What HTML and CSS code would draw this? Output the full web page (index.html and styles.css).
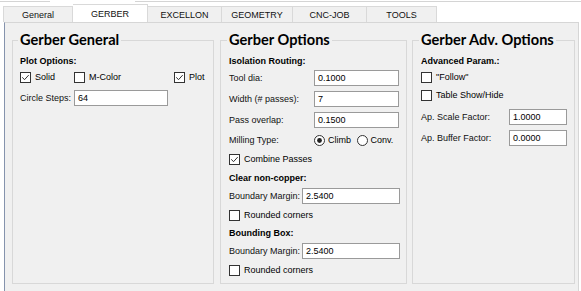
FILE: index.html
```html
<!DOCTYPE html>
<html>
<head>
<meta charset="utf-8">
<link rel="stylesheet" href="styles.css">
</head>
<body>
<div class="topline"></div>
<div class="tabs">
  <div class="tab t-general">General</div>
  <div class="tab t-gerber active">GERBER</div>
  <div class="tab t-excellon">EXCELLON</div>
  <div class="tab t-geometry">GEOMETRY</div>
  <div class="tab t-cnc">CNC-JOB</div>
  <div class="tab t-tools">TOOLS</div>
</div>
<div class="pane">
  <fieldset class="group g-general">
    <legend>Gerber General</legend>
    <div class="head">Plot Options:</div>
    <div class="checks3 mt2">
      <div class="chk"><svg class="box" viewBox="0 0 11 11"><rect x="0.5" y="0.5" width="10" height="10" fill="#fff" stroke="#333"/><path d="M2.3 5.3l2.2 2.4 4.2-4.6" fill="none" stroke="#333" stroke-width="1"/></svg>Solid</div>
      <div class="chk"><svg class="box" viewBox="0 0 11 11"><rect x="0.5" y="0.5" width="10" height="10" fill="#fff" stroke="#333"/></svg>M-Color</div>
      <div class="chk"><svg class="box" viewBox="0 0 11 11"><rect x="0.5" y="0.5" width="10" height="10" fill="#fff" stroke="#333"/><path d="M2.3 5.3l2.2 2.4 4.2-4.6" fill="none" stroke="#333" stroke-width="1"/></svg>Plot</div>
    </div>
    <div class="field f-gen mt6">
      <span class="lbl">Circle Steps:</span><span class="inp">64</span>
    </div>
  </fieldset>

  <fieldset class="group g-options">
    <legend>Gerber Options</legend>
    <div class="head">Isolation Routing:</div>
    <div class="field f-opt mt2"><span class="lbl">Tool dia:</span><span class="inp">0.1000</span></div>
    <div class="field f-opt mt5"><span class="lbl">Width (# passes):</span><span class="inp">7</span></div>
    <div class="field f-opt mt5"><span class="lbl">Pass overlap:</span><span class="inp">0.1500</span></div>
    <div class="field f-opt mt4">
      <span class="lbl">Milling Type:</span>
      <span class="radios">
        <span class="rad"><svg class="box" viewBox="0 0 11 11"><circle cx="5.5" cy="5.5" r="5" fill="#fff" stroke="#333"/><circle cx="5.5" cy="5.5" r="2.4" fill="#222"/></svg>Climb</span>
        <span class="rad"><svg class="box" viewBox="0 0 11 11"><circle cx="5.5" cy="5.5" r="5" fill="#fff" stroke="#333"/></svg>Conv.</span>
      </span>
    </div>
    <div class="chk row mt4"><svg class="box" viewBox="0 0 11 11"><rect x="0.5" y="0.5" width="10" height="10" fill="#fff" stroke="#333"/><path d="M2.3 5.3l2.2 2.4 4.2-4.6" fill="none" stroke="#333" stroke-width="1"/></svg>Combine Passes</div>
    <div class="head mt5">Clear non-copper:</div>
    <div class="field f-bm mt3"><span class="lbl">Boundary Margin:</span><span class="inp">2.5400</span></div>
    <div class="chk row mt4"><svg class="box" viewBox="0 0 11 11"><rect x="0.5" y="0.5" width="10" height="10" fill="#fff" stroke="#333"/></svg>Rounded corners</div>
    <div class="head mt4">Bounding Box:</div>
    <div class="field f-bm mt3"><span class="lbl">Boundary Margin:</span><span class="inp">2.5400</span></div>
    <div class="chk row mt4"><svg class="box" viewBox="0 0 11 11"><rect x="0.5" y="0.5" width="10" height="10" fill="#fff" stroke="#333"/></svg>Rounded corners</div>
  </fieldset>

  <fieldset class="group g-adv">
    <legend>Gerber Adv. Options</legend>
    <div class="head">Advanced Param.:</div>
    <div class="chk row mt2"><svg class="box" viewBox="0 0 11 11"><rect x="0.5" y="0.5" width="10" height="10" fill="#fff" stroke="#333"/></svg>"Follow"</div>
    <div class="chk row mt4"><svg class="box" viewBox="0 0 11 11"><rect x="0.5" y="0.5" width="10" height="10" fill="#fff" stroke="#333"/></svg>Table Show/Hide</div>
    <div class="field f-adv mt7"><span class="lbl">Ap. Scale Factor:</span><span class="inp">1.0000</span></div>
    <div class="field f-adv mt5"><span class="lbl">Ap. Buffer Factor:</span><span class="inp">0.0000</span></div>
  </fieldset>
</div>
</body>
</html>
```

FILE: styles.css
```css
html, body {
  margin: 0;
  padding: 0;
  background: #ffffff;
  overflow: hidden;
}
body {
  width: 581px;
  height: 291px;
  font-family: "Liberation Sans", Arial, sans-serif;
  font-size: 9px;
  color: #000;
}
.topline {
  margin-top: 1px;
  height: 1px;
  background: linear-gradient(to right, #d4d4d4 0 50px, transparent 50px 135px, #d4d4d4 135px);
}
.tabs {
  display: flex;
  align-items: flex-end;
  height: 20px;
  padding-left: 3px;
}
.tab {
  box-sizing: border-box;
  height: 16px;
  background: #f0f0f0;
  border: 1px solid #d9d9d9;
  border-bottom: none;
  border-left: none;
  display: flex;
  align-items: center;
  justify-content: center;
  padding-top: 1px;
  color: #111;
}
.tab.t-general { border-left: 1px solid #d9d9d9; width: 70px; }
.tab.t-gerber { width: 75px; }
.tab.t-excellon { width: 74px; }
.tab.t-geometry { width: 71px; }
.tab.t-cnc { width: 74px; }
.tab.t-tools { width: 70px; }
.tab.active {
  height: 18px;
  background: #ffffff;
  border-color: #d9d9d9;
  padding-top: 0;
}
.pane {
  box-sizing: border-box;
  margin-left: 4px;
  width: 575px;
  height: 280px;
  background: #f0f0f0;
  border: 1px solid #d6d6d6;
  border-left-color: #8593ad;
  display: flex;
  align-items: flex-start;
  gap: 6px;
  padding: 8px 0 0 7px;
}
.group {
  box-sizing: border-box;
  margin: 0;
  height: 253px;
  border: 1px solid #d8d8d8;
  padding: 0 6px 0 7px;
  min-width: 0;
  display: flex;
  flex-direction: column;
}
.group legend {
  font-family: Lato, "Liberation Sans", sans-serif;
  font-weight: 700;
  font-size: 14.6px;
  line-height: 18px;
  padding: 0 2px;
  margin-left: -2px;
  color: #000;
}
.g-general { width: 202px; }
.g-options { width: 187px; padding-left: 8px; }
.g-adv { width: 163px; margin-left: -1px; padding-left: 8px; }

.head {
  margin-top: 5px;
  height: 14px;
  line-height: 14px;
  font-weight: 700;
}
.mt2 { margin-top: 2px; }
.mt3 { margin-top: 3px; }
.mt4 { margin-top: 4px; }
.mt5 { margin-top: 5px; }
.mt6 { margin-top: 6px; }
.mt7 { margin-top: 7px; }

.checks3 {
  display: grid;
  grid-template-columns: 54px 100px auto;
  height: 14px;
  align-items: center;
}
.chk, .rad {
  display: flex;
  align-items: center;
  height: 14px;
  white-space: nowrap;
}
.box {
  width: 11px;
  height: 11px;
  flex: none;
  margin-right: 4px;
}
.field {
  display: grid;
  height: 16px;
  align-items: center;
}
.f-gen { grid-template-columns: 54px 94px; }
.f-opt { grid-template-columns: 85px 85px; }
.f-bm { grid-template-columns: 73px 98px; }
.f-adv { grid-template-columns: 88px 58px; }
.lbl { white-space: nowrap; color: #111; }
.inp {
  box-sizing: border-box;
  height: 16px;
  line-height: 14px;
  background: #fff;
  border: 1px solid #9a9a9a;
  padding-left: 3px;
  white-space: nowrap;
}
.radios {
  display: flex;
  align-items: center;
  height: 14px;
}
.rad { width: 44px; }
.rad .box { margin-right: 3px; }
```
